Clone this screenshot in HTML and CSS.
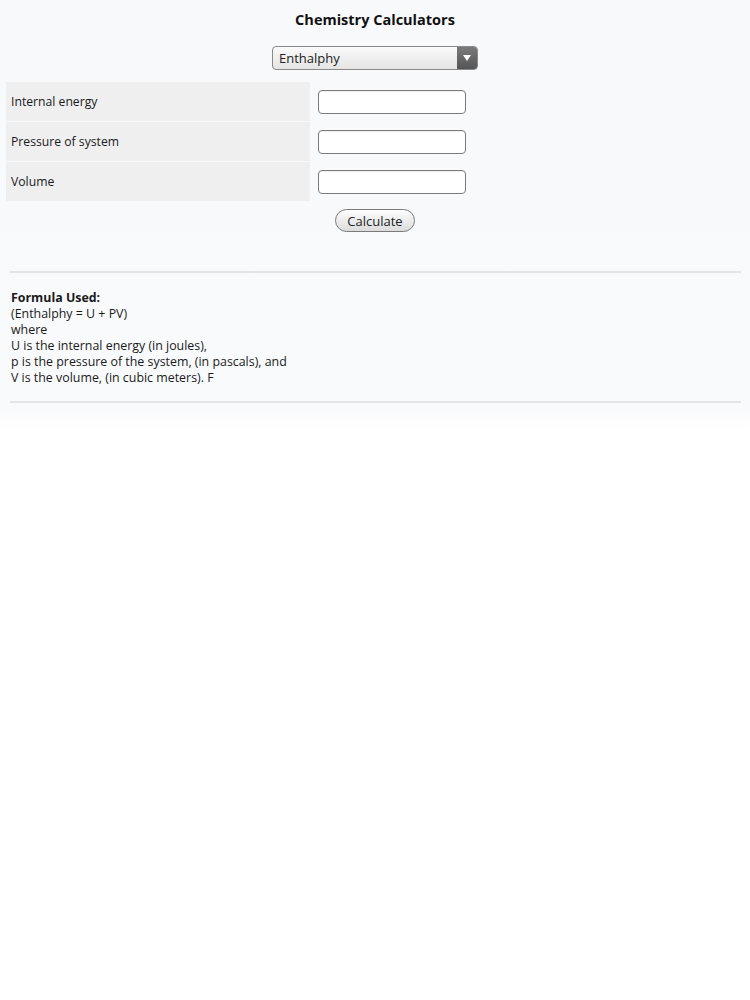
FILE: index.html
```html
<!DOCTYPE html>
<html>
<head>
<meta charset="utf-8">
<link rel="stylesheet" href="styles.css">
</head>
<body>
<div class="page">
  <h1 class="title">Chemistry Calculators</h1>
  <div class="select-row">
    <div class="select">
      <span class="select-text">Enthalphy</span>
      <span class="select-btn"><svg width="10" height="8" viewBox="0 0 10 8"><path d="M1 1 L9 1 L5 7 Z" fill="#fff"/></svg></span>
    </div>
  </div>
  <div class="form">
    <div class="row">
      <div class="label">Internal energy</div>
      <div class="field"><span class="input"></span></div>
    </div>
    <div class="row">
      <div class="label">Pressure of system</div>
      <div class="field"><span class="input"></span></div>
    </div>
    <div class="row">
      <div class="label">Volume</div>
      <div class="field"><span class="input"></span></div>
    </div>
    <div class="btn-row"><span class="button">Calculate</span></div>
  </div>
  <div class="rule rule-top"></div>
  <div class="formula">
    <div class="formula-head">Formula Used:</div>
    <div>(Enthalphy = U + PV)</div>
    <div>where</div>
    <div>U is the internal energy (in joules),</div>
    <div>p is the pressure of the system, (in pascals), and</div>
    <div>V is the volume, (in cubic meters). F</div>
  </div>
  <div class="rule rule-bottom"></div>
</div>
</body>
</html>
```
FILE: styles.css
```css
html, body {
  margin: 0;
  padding: 0;
  background: #ffffff;
}
body {
  font-family: "Open Sans", "DejaVu Sans", sans-serif;
  font-size: 12px;
  color: #1a1a1a;
}
.page {
  background: linear-gradient(#f8f9fb 0, #f9fafc 405px, #fdfdfe 420px, #ffffff 430px);
  padding: 10px 0 20px;
  min-height: 400px;
}
.title {
  margin: 0;
  text-align: center;
  font-size: 14.5px;
  font-weight: 700;
  line-height: 20px;
  color: #111;
}
.select-row {
  display: flex;
  justify-content: center;
  margin-top: 16px;
}
.select {
  width: 206px;
  height: 24px;
  box-sizing: border-box;
  border: 1px solid #8a8a8a;
  border-radius: 4px;
  background: linear-gradient(#fafafa, #e4e4e4);
  display: flex;
  align-items: center;
  overflow: hidden;
}
.select-text {
  flex: 1;
  padding-left: 6px;
  font-size: 13px;
  color: #222;
}
.select-btn {
  width: 20px;
  height: 100%;
  background: linear-gradient(#7a7a7a, #555);
  display: flex;
  align-items: center;
  justify-content: center;
}
.form {
  margin: 12px 0 0 6px;
  width: 470px;
}
.row {
  display: flex;
  height: 40px;
}
.label {
  width: 304px;
  background: #efeff0;
  padding-left: 5px;
  display: flex;
  align-items: center;
  border-bottom: 1px solid #f8f9fb;
  box-sizing: border-box;
  font-size: 12.2px;
}
.field {
  flex: 1;
  display: flex;
  align-items: center;
  padding-left: 8px;
}
.input {
  width: 148px;
  height: 24px;
  box-sizing: border-box;
  border: 1px solid #7c7c7c;
  border-radius: 4px;
  background: #fff;
  box-shadow: inset 0 1px 1px rgba(0,0,0,0.08);
}
.btn-row {
  display: flex;
  padding-left: 329px;
  margin-top: 7px;
}
.button {
  width: 80px;
  height: 23px;
  box-sizing: border-box;
  border: 1px solid #7a7a7a;
  border-radius: 12px;
  background: linear-gradient(#fdfdfd, #dcdcdc);
  display: flex;
  align-items: center;
  justify-content: center;
  font-size: 13px;
  color: #222;
}
.rule {
  height: 2px;
  margin: 0 9px 0 10px;
  background: #e3e4e6;
}
.rule-top {
  margin-top: 39px;
}
.formula {
  padding: 17px 11px 0;
  line-height: 16px;
  font-size: 12.4px;
}
.formula-head {
  font-weight: 700;
}
.rule-bottom {
  margin-top: 15px;
}
```
